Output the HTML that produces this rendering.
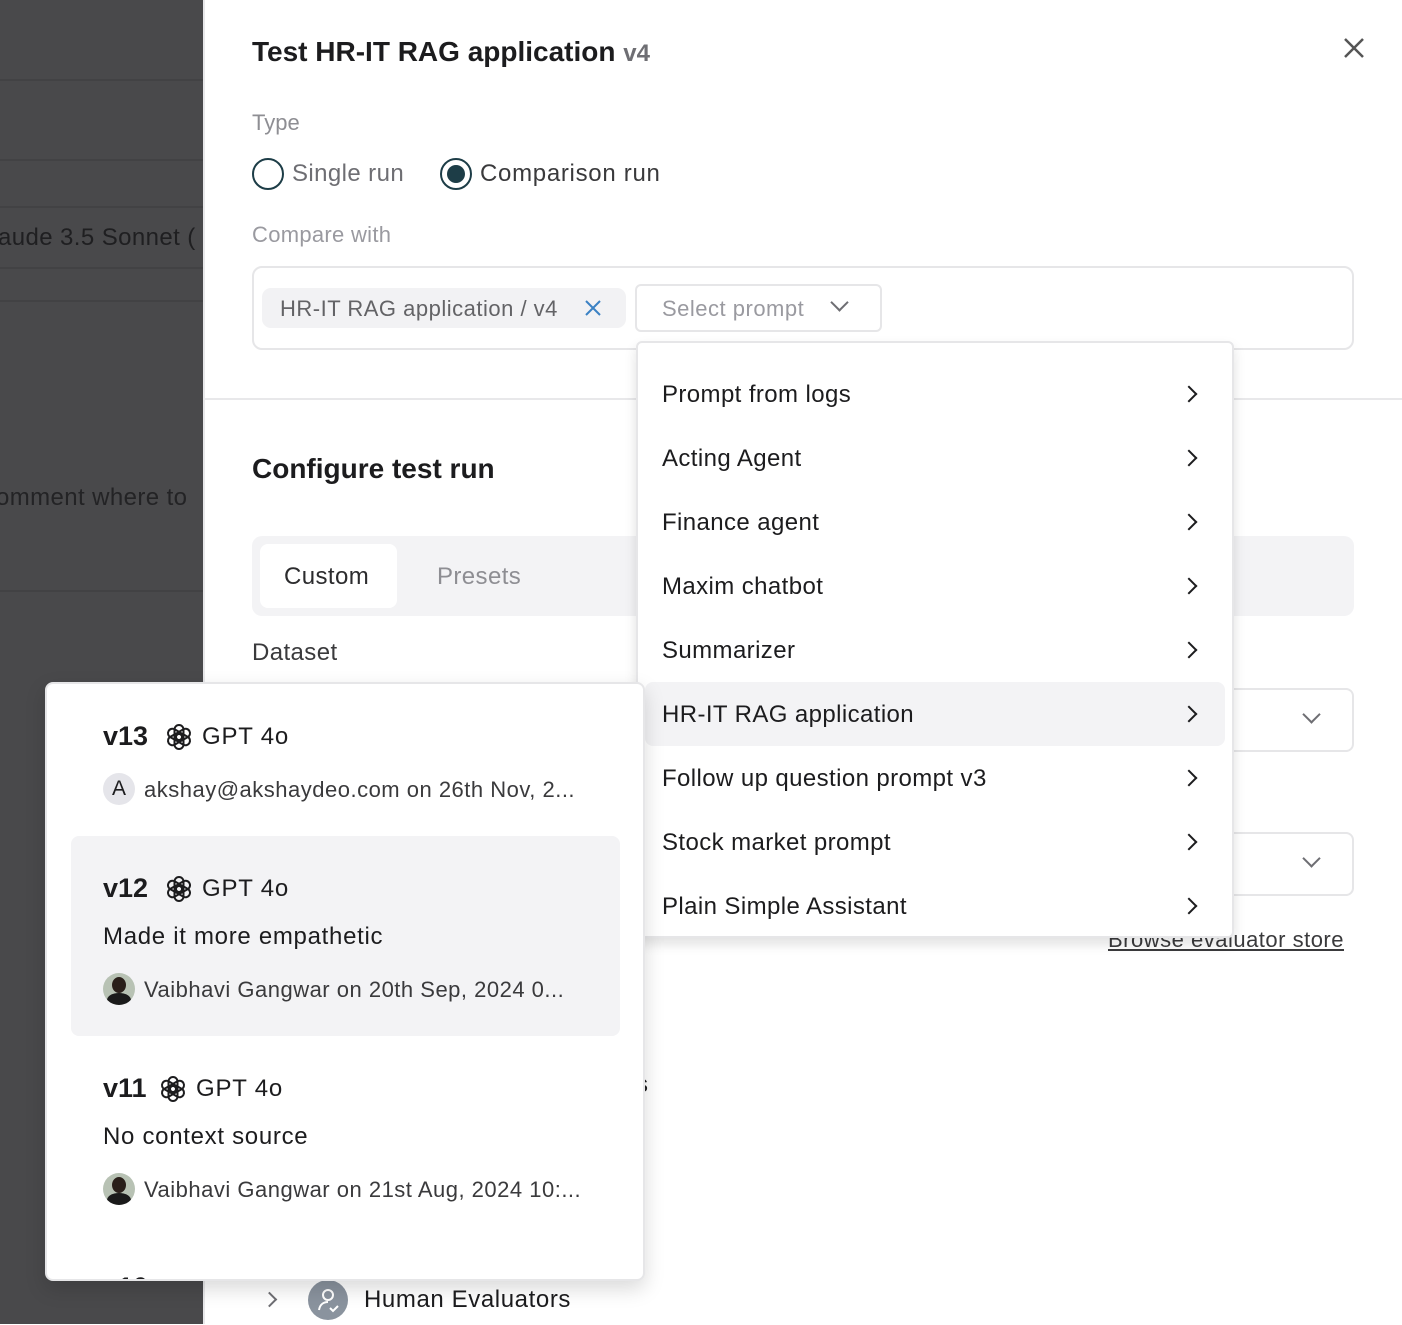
<!DOCTYPE html>
<html><head><meta charset="utf-8"><style>
*{margin:0;padding:0;box-sizing:border-box}
body{width:1402px;height:1324px;position:relative;overflow:hidden;background:#fff;font-family:"Liberation Sans",sans-serif;color:#1c1c1e}
.a{position:absolute;white-space:nowrap}
.dark{left:0;top:0;width:203px;height:1324px;background:#49494b}
.ln{position:absolute;left:0;width:203px;height:2px;background:#424244}
.t24{font-size:24px;letter-spacing:0.4px}
.grey{color:#8e8e93}
.chev{position:absolute;width:12px;height:12px;border-right:2.5px solid #1c1c1e;border-top:2.5px solid #1c1c1e;transform:rotate(45deg)}
.dchev{position:absolute;width:13px;height:13px;border-right:2px solid #6e6e73;border-bottom:2px solid #6e6e73;transform:rotate(45deg)}
.mi{position:absolute;left:662px;font-size:24px;letter-spacing:0.4px;color:#1c1c1e}
.av{position:absolute;width:32px;height:32px;border-radius:50%}
</style></head><body>
<div class="a dark"></div>
<div class="ln" style="top:79px"></div>
<div class="ln" style="top:159px"></div>
<div class="ln" style="top:206px"></div>
<div class="ln" style="top:267px"></div>
<div class="ln" style="top:300px"></div>
<div class="ln" style="top:590px"></div>
<div class="a t24" style="left:-2px;top:224px;color:#1f1f21">aude 3.5 Sonnet (</div>
<div class="a t24" style="left:-4px;top:484px;color:#232325">omment where to</div>
<div class="a" style="left:203px;top:0;width:2px;height:1324px;background:#e8e8ea"></div>

<div class="a" style="left:252px;top:36px;font-size:28px;font-weight:bold;letter-spacing:0px">Test HR-IT RAG application <span style="color:#6e6e73;font-size:24px">v4</span></div>
<svg class="a" style="left:1342px;top:36px" width="24" height="24"><path d="M3 3L21 21M21 3L3 21" stroke="#555" stroke-width="2.5"/></svg>
<div class="a grey" style="left:252px;top:110px;font-size:22px">Type</div>
<div class="a" style="left:252px;top:158px;width:32px;height:32px;border:2.5px solid #1d3d47;border-radius:50%"></div>
<div class="a t24" style="left:292px;top:160px;color:#6e6e73">Single run</div>
<div class="a" style="left:440px;top:158px;width:32px;height:32px;border:2.5px solid #1d3d47;border-radius:50%"><div style="position:absolute;left:4.5px;top:4.5px;width:18px;height:18px;border-radius:50%;background:#1d3d47"></div></div>
<div class="a t24" style="left:480px;top:160px;color:#3a3a3c;letter-spacing:0.7px">Comparison run</div>
<div class="a grey" style="left:252px;top:222px;font-size:22px;color:#9a9aa0;letter-spacing:0.3px">Compare with</div>
<div class="a" style="left:252px;top:266px;width:1102px;height:84px;border:2px solid #e6e6e8;border-radius:10px"></div>
<div class="a" style="left:262px;top:288px;width:364px;height:40px;background:#f2f2f4;border-radius:9px"></div>
<div class="a" style="left:280px;top:296px;font-size:22px;color:#636366;letter-spacing:0.5px">HR-IT RAG application / v4</div>
<svg class="a" style="left:584px;top:299px" width="18" height="18"><path d="M2 2L16 16M16 2L2 16" stroke="#3b82c4" stroke-width="2"/></svg>
<div class="a" style="left:635px;top:284px;width:247px;height:48px;border:2px solid #e6e6e8;border-radius:6px"></div>
<div class="a" style="left:662px;top:296px;font-size:22px;color:#9a9aa0;letter-spacing:0.5px">Select prompt</div>
<div class="dchev" style="left:833px;top:296px"></div>
<div class="a" style="left:205px;top:398px;width:1197px;height:2px;background:#e8e8ea"></div>

<div class="a" style="left:252px;top:453px;font-size:28px;font-weight:bold">Configure test run</div>
<div class="a" style="left:252px;top:536px;width:1102px;height:80px;background:#f3f3f5;border-radius:10px"></div>
<div class="a" style="left:260px;top:544px;width:137px;height:64px;background:#fff;border-radius:8px"></div>
<div class="a t24" style="left:284px;top:563px;color:#2c2c2e">Custom</div>
<div class="a t24" style="left:437px;top:563px;color:#8e8e93">Presets</div>
<div class="a t24" style="left:252px;top:639px;color:#3a3a3c">Dataset</div>
<div class="a" style="left:1200px;top:688px;width:154px;height:64px;border:2px solid #e6e6e8;border-radius:8px"></div>
<div class="dchev" style="left:1305px;top:708px"></div>
<div class="a" style="left:1200px;top:832px;width:154px;height:64px;border:2px solid #e6e6e8;border-radius:8px"></div>
<div class="dchev" style="left:1305px;top:852px"></div>
<div class="a" style="left:1108px;top:927px;font-size:22px;color:#3a3a3c;text-decoration:underline;letter-spacing:0.5px">Browse evaluator store</div>
<div class="a t24" style="left:636px;top:1071px">s</div>
<div class="chev" style="left:264px;top:1294px;border-color:#6e6e73;width:11px;height:11px"></div>
<div class="av" style="left:308px;top:1280px;width:40px;height:40px;background:#8a939e"><svg width="40" height="40"><circle cx="20" cy="15" r="5" fill="none" stroke="#fff" stroke-width="2"/><path d="M11 30c1-6 5-8 9-8" fill="none" stroke="#fff" stroke-width="2"/><path d="M22 28l3 3 5-5" fill="none" stroke="#fff" stroke-width="2"/></svg></div>
<div class="a t24" style="left:364px;top:1286px;letter-spacing:0.6px">Human Evaluators</div>

<!-- prompt dropdown -->
<div class="a" style="left:636px;top:341px;width:598px;height:597px;background:#fff;border:2px solid #e6e6e8;border-radius:6px;box-shadow:0 6px 12px rgba(0,0,0,.12)"></div>
<div class="a" style="left:645px;top:682px;width:580px;height:64px;background:#f3f3f5;border-radius:8px"></div>
<div class="mi" style="top:381px">Prompt from logs</div><div class="chev" style="left:1183px;top:388px"></div>
<div class="mi" style="top:445px">Acting Agent</div><div class="chev" style="left:1183px;top:452px"></div>
<div class="mi" style="top:509px">Finance agent</div><div class="chev" style="left:1183px;top:516px"></div>
<div class="mi" style="top:573px">Maxim chatbot</div><div class="chev" style="left:1183px;top:580px"></div>
<div class="mi" style="top:637px">Summarizer</div><div class="chev" style="left:1183px;top:644px"></div>
<div class="mi" style="top:701px">HR-IT RAG application</div><div class="chev" style="left:1183px;top:708px"></div>
<div class="mi" style="top:765px">Follow up question prompt v3</div><div class="chev" style="left:1183px;top:772px"></div>
<div class="mi" style="top:829px">Stock market prompt</div><div class="chev" style="left:1183px;top:836px"></div>
<div class="mi" style="top:893px">Plain Simple Assistant</div><div class="chev" style="left:1183px;top:900px"></div>

<svg width="0" height="0" style="position:absolute"><defs><g id="oai" fill="none" stroke="#1c1c1e" stroke-width="2"><g transform="translate(14 14)"><rect x="-4.5" y="-12" width="9" height="15" rx="4.5"/><rect x="-4.5" y="-12" width="9" height="15" rx="4.5" transform="rotate(60)"/><rect x="-4.5" y="-12" width="9" height="15" rx="4.5" transform="rotate(120)"/><rect x="-4.5" y="-12" width="9" height="15" rx="4.5" transform="rotate(180)"/><rect x="-4.5" y="-12" width="9" height="15" rx="4.5" transform="rotate(240)"/><rect x="-4.5" y="-12" width="9" height="15" rx="4.5" transform="rotate(300)"/></g></g></defs></svg>

<!-- versions popup -->
<div class="a" style="left:45px;top:682px;width:600px;height:599px;background:#fff;border:2px solid #e6e6e8;border-radius:8px;box-shadow:0 8px 20px rgba(0,0,0,.15);overflow:hidden">
 <div class="a" style="left:24px;top:152px;width:549px;height:200px;background:#f3f3f5;border-radius:8px"></div>
 <div class="a" style="left:56px;top:37px;font-size:27px;font-weight:bold">v13</div>
 <svg class="a" style="left:118px;top:39px" width="28" height="28" viewBox="0 0 28 28"><use href="#oai"/></svg>
 <div class="a t24" style="left:155px;top:39px;letter-spacing:0.8px">GPT 4o</div>
 <div class="av" style="left:56px;top:89px;background:#e5e5ea;font-size:21px;text-align:center;line-height:32px;color:#1c1c1e">A</div>
 <div class="a" style="left:97px;top:93px;font-size:22px;color:#3a3a3c;letter-spacing:0.5px">akshay@akshaydeo.com on 26th Nov, 2...</div>

 <div class="a" style="left:56px;top:189px;font-size:27px;font-weight:bold">v12</div>
 <svg class="a" style="left:118px;top:191px" width="28" height="28" viewBox="0 0 28 28"><use href="#oai"/></svg>
 <div class="a t24" style="left:155px;top:191px;letter-spacing:0.8px">GPT 4o</div>
 <div class="a t24" style="left:56px;top:239px;letter-spacing:0.7px">Made it more empathetic</div>
 <div class="av" style="left:56px;top:289px;background:#b8c2b4;overflow:hidden"><div style="position:absolute;left:9px;top:4px;width:14px;height:16px;border-radius:50%;background:#2a1f1a"></div><div style="position:absolute;left:4px;top:20px;width:24px;height:14px;border-radius:50% 50% 0 0;background:#1a1a1a"></div></div>
 <div class="a" style="left:97px;top:293px;font-size:22px;color:#3a3a3c;letter-spacing:0.5px">Vaibhavi Gangwar on 20th Sep, 2024 0...</div>

 <div class="a" style="left:56px;top:389px;font-size:27px;font-weight:bold">v11</div>
 <svg class="a" style="left:112px;top:391px" width="28" height="28" viewBox="0 0 28 28"><use href="#oai"/></svg>
 <div class="a t24" style="left:149px;top:391px;letter-spacing:0.8px">GPT 4o</div>
 <div class="a t24" style="left:56px;top:439px;letter-spacing:0.7px">No context source</div>
 <div class="av" style="left:56px;top:489px;background:#b8c2b4;overflow:hidden"><div style="position:absolute;left:9px;top:4px;width:14px;height:16px;border-radius:50%;background:#2a1f1a"></div><div style="position:absolute;left:4px;top:20px;width:24px;height:14px;border-radius:50% 50% 0 0;background:#1a1a1a"></div></div>
 <div class="a" style="left:97px;top:493px;font-size:22px;color:#3a3a3c;letter-spacing:0.5px">Vaibhavi Gangwar on 21st Aug, 2024 10:...</div>
 <div class="a" style="left:56px;top:588px;font-size:27px;font-weight:bold">v10</div>
</div>
</body></html>
